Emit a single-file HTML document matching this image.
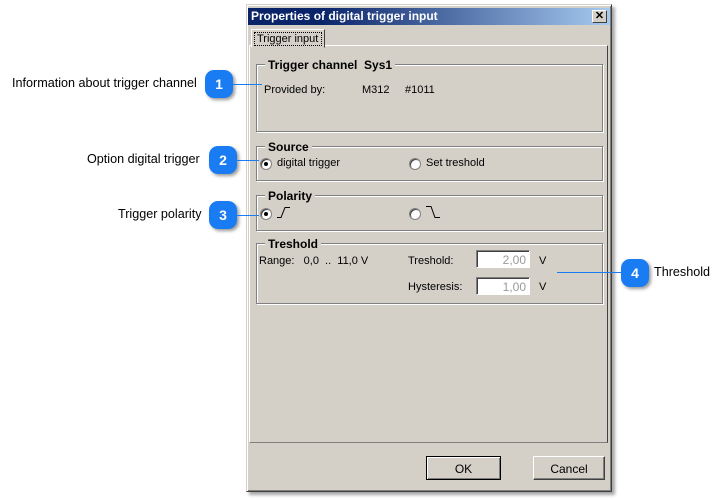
<!DOCTYPE html><html><head><style>
body{margin:0;width:726px;height:500px;background:#fff;position:relative;font-family:"Liberation Sans",sans-serif;overflow:hidden}
.a{position:absolute;white-space:nowrap}
.t{font-size:11px;color:#000}
.o{font-size:12.6px;color:#000}
.dlg{left:246px;top:4px;width:364px;height:486px;background:#d4d0c8;border:1px solid;border-color:#d4d0c8 #404040 #404040 #d4d0c8;box-shadow:inset 1px 1px #fff,inset -1px -1px #808080,3px 3px 3px rgba(0,0,0,.35)}
.title{left:248px;top:8px;width:362px;height:17px;background:linear-gradient(90deg,#0a246a 20%,#a6caf0);color:#fff;font-weight:bold;font-size:12px;line-height:17px;text-indent:3px}
.x{left:592px;top:10px;width:13px;height:11px;background:#d4d0c8;border:1px solid;border-color:#fff #404040 #404040 #fff;font-size:11px;line-height:11px;text-align:center;color:#000;font-weight:bold}
.panel{left:249px;top:45px;width:357px;height:396px;border:1px solid;border-color:#fff #404040 #808080 #fff}
.grp{border:1px solid #808080;box-shadow:1px 1px #fff,inset 1px 1px #fff}
.lg{background:#d4d0c8;font-weight:bold;font-size:12px;padding:0 3px;color:#000}
.rad{width:10px;height:10px;border-radius:50%;background:#fff;border:1px solid #808080;box-shadow:inset 1px 1px #404040}
.dot{left:3px;top:3px;width:4px;height:4px;border-radius:50%;background:#000}
.bub{width:28px;height:28px;border-radius:9px;background:#1a7cf2;color:#fff;font-weight:bold;font-size:14px;text-align:center;line-height:28px;box-shadow:2px 2px 3px rgba(0,0,0,.4)}
.ln{height:1px;background:#1a7cf2}
.ed{width:54px;height:18px;background:#fff;border:1px solid;border-color:#808080 #fff #fff #808080;box-shadow:inset 1px 1px #404040;color:#999;font-size:12px;text-align:right;line-height:18px;box-sizing:border-box;padding-right:3px}
.btn{height:24px;background:#d4d0c8;border:1px solid;border-color:#fff #404040 #404040 #fff;font-size:12px;text-align:center;line-height:24px;box-sizing:border-box}
</style></head><body>
<div class="a dlg"></div>
<div class="a title">Properties of digital trigger input</div>
<div class="a x">✕</div>
<div class="a panel"></div>
<div class="a t" style="left:251px;top:29px;width:72px;height:17px;background:#d4d0c8;border:1px solid;border-color:#fff #404040 transparent #fff;z-index:2"><div style="margin:2px;border:1px dotted #000;line-height:12px;padding:0 2px">Trigger input</div></div>

<div class="a grp" style="left:256px;top:64px;width:345px;height:66px"></div>
<div class="a lg" style="left:265px;top:58px">Trigger channel&nbsp; Sys1</div>
<div class="a t" style="left:264px;top:84px">Provided by:</div>
<div class="a t" style="left:362px;top:84px">M312</div>
<div class="a t" style="left:405px;top:84px">#1011</div>

<div class="a grp" style="left:256px;top:146px;width:345px;height:33px"></div>
<div class="a lg" style="left:265px;top:140px">Source</div>
<div class="a rad" style="left:260px;top:158px"><div class="a dot"></div></div>
<div class="a t" style="left:277px;top:157px">digital trigger</div>
<div class="a rad" style="left:409px;top:158px"></div>
<div class="a t" style="left:426px;top:157px">Set treshold</div>

<div class="a grp" style="left:256px;top:195px;width:345px;height:34px"></div>
<div class="a lg" style="left:265px;top:189px">Polarity</div>
<div class="a rad" style="left:260px;top:208px"><div class="a dot"></div></div>
<svg class="a" style="left:276px;top:205px" width="20" height="14"><path d="M1 12.5H5L9 2.5H14" stroke="#000" fill="none" stroke-width="1"/></svg>
<div class="a rad" style="left:409px;top:208px"></div>
<svg class="a" style="left:425px;top:205px" width="20" height="14"><path d="M1 1.5H6L10 12.5H15" stroke="#000" fill="none" stroke-width="1"/></svg>

<div class="a grp" style="left:256px;top:243px;width:345px;height:59px"></div>
<div class="a lg" style="left:265px;top:237px">Treshold</div>
<div class="a t" style="left:259px;top:255px">Range:&nbsp;&nbsp; 0,0&nbsp; ..&nbsp; 11,0 V</div>
<div class="a t" style="left:408px;top:255px">Treshold:</div>
<div class="a ed" style="left:476px;top:250px">2,00</div>
<div class="a t" style="left:539px;top:255px">V</div>
<div class="a t" style="left:408px;top:281px">Hysteresis:</div>
<div class="a ed" style="left:476px;top:277px">1,00</div>
<div class="a t" style="left:539px;top:281px">V</div>

<div class="a btn" style="left:426px;top:456px;width:75px;border:1px solid #000;box-shadow:inset 1px 1px #fff,inset -1px -1px #808080">OK</div>
<div class="a btn" style="left:533px;top:456px;width:72px;box-shadow:inset -1px -1px #808080">Cancel</div>

<div class="a o" style="left:12px;top:76px">Information about trigger channel</div>
<div class="a bub" style="left:205px;top:70px">1</div>
<div class="a ln" style="left:233px;top:84px;width:29px"></div>
<div class="a o" style="left:87px;top:152px">Option digital trigger</div>
<div class="a bub" style="left:209px;top:146px">2</div>
<div class="a ln" style="left:237px;top:160px;width:22px"></div>
<div class="a o" style="left:118px;top:207px">Trigger polarity</div>
<div class="a bub" style="left:209px;top:201px">3</div>
<div class="a ln" style="left:237px;top:215px;width:22px"></div>
<div class="a ln" style="left:557px;top:272px;width:65px"></div>
<div class="a bub" style="left:621px;top:259px">4</div>
<div class="a o" style="left:654px;top:265px">Threshold</div>
</body></html>
